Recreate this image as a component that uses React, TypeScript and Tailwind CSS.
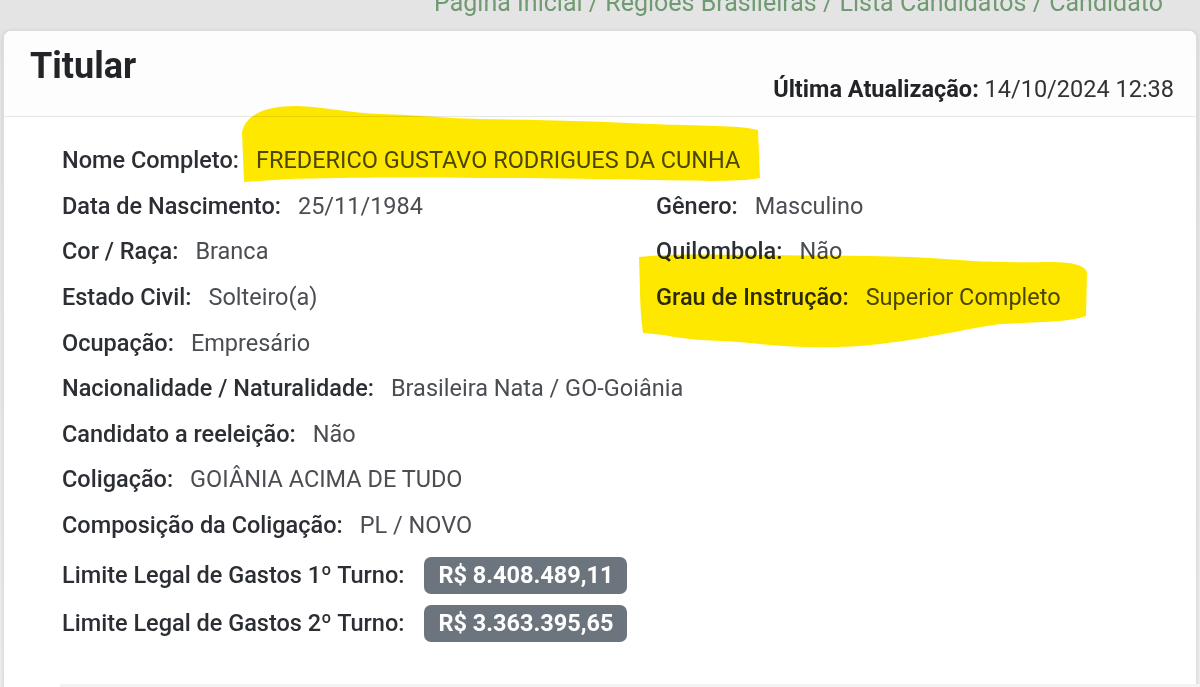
import React from 'react';

// Linha de campo: rótulo em negrito médio + valor
function Field({ label, value }: { label: string; value: React.ReactNode }) {
  return (
    <div className="flex items-center h-[45.6px] whitespace-nowrap">
      <span className="font-medium text-[#2b2e33]">{label}</span>
      <span className="ml-[17px] text-[#4a4d52]">{value}</span>
    </div>
  );
}

function Badge({ children }: { children: React.ReactNode }) {
  return (
    <span className="inline-flex items-center justify-center w-[203px] h-[37px] rounded-[7px] bg-[#6c757d] text-white font-bold text-[23.5px]">
      {children}
    </span>
  );
}

export default function App() {
  const left: [string, string][] = [
    ['Data de Nascimento:', '25/11/1984'],
    ['Cor / Raça:', 'Branca'],
    ['Estado Civil:', 'Solteiro(a)'],
  ];
  const right: [string, string][] = [
    ['Gênero:', 'Masculino'],
    ['Quilombola:', 'Não'],
    ['Grau de Instrução:', 'Superior Completo'],
  ];
  const rest: [string, string][] = [
    ['Ocupação:', 'Empresário'],
    ['Nacionalidade / Naturalidade:', 'Brasileira Nata / GO-Goiânia'],
    ['Candidato a reeleição:', 'Não'],
    ['Coligação:', 'GOIÂNIA ACIMA DE TUDO'],
    ['Composição da Coligação:', 'PL / NOVO'],
  ];

  return (
    <div
      className="relative w-[1200px] h-[687px] overflow-hidden bg-gradient-to-b from-[#e4e4e4] to-[#efefef]"
      style={{ fontFamily: 'Roboto, "Noto Sans", sans-serif' }}
    >
      {/* breadcrumb cortado no topo */}
      <div className="h-[30px] flex justify-end items-start pr-[37px]">
        <span className="text-[25px] leading-none text-[#6f9a72] whitespace-nowrap -mt-[10px]">
          Página Inicial / Regiões Brasileiras / Lista Candidatos / Candidato
        </span>
      </div>

      <div className="ml-[3px] mr-[3px] h-[700px] bg-white rounded-t-[8px] border border-[#dedede] shadow-[0_1px_4px_rgba(0,0,0,0.12)]">
        <div className="h-[86px] flex justify-between border-b border-[#e6e6e6] bg-[#fdfdfd] rounded-t-[8px] px-[26px] pr-[22px]">
          <h1 className="pt-[14px] text-[36px] leading-[42px] font-bold text-[#222428]">Titular</h1>
          <div className="pt-[41px] text-[23.5px] text-[#333] whitespace-nowrap">
            <span className="font-bold text-[#222428]">Última Atualização:</span> 14/10/2024 12:38
          </div>
        </div>

        <div className="relative pl-[58px] pt-[21px] text-[23.5px]">
          <Field label="Nome Completo:" value="FREDERICO GUSTAVO RODRIGUES DA CUNHA" />
          <div className="grid grid-cols-[594px_1fr]">
            <div>
              {left.map(([l, v]) => (
                <Field key={l} label={l} value={v} />
              ))}
            </div>
            <div>
              {right.map(([l, v]) => (
                <Field key={l} label={l} value={v} />
              ))}
            </div>
          </div>
          {rest.map(([l, v]) => (
            <Field key={l} label={l} value={v} />
          ))}
          <div className="flex items-center h-[48px] mt-[3px] whitespace-nowrap">
            <span className="font-medium text-[#2b2e33]">Limite Legal de Gastos 1º Turno:</span>
            <span className="ml-[20px]"><Badge>R$ 8.408.489,11</Badge></span>
          </div>
          <div className="flex items-center h-[48px] whitespace-nowrap">
            <span className="font-medium text-[#2b2e33]">Limite Legal de Gastos 2º Turno:</span>
            <span className="ml-[20px]"><Badge>R$ 3.363.395,65</Badge></span>
          </div>
        </div>
      </div>

      {/* marcações de marca-texto sobre o conteúdo */}
      <svg
        className="absolute left-0 top-0 pointer-events-none mix-blend-multiply"
        width="1200"
        height="687"
        viewBox="0 0 1200 687"
      >
        <path
          d="M242 132 C246 114 266 106 296 106 C326 107 350 113 380 114 C420 115 440 118 480 119 C540 120 600 121 650 124 C700 126 740 125 758 130 L760 178 C740 182 700 181 650 180 C600 179 540 178 480 178 C400 177 330 178 290 179 L244 182 Z"
          fill="#ffe800"
        />
        <path
          d="M639 257 C660 254 700 254 760 255 C820 256 880 255 930 258 C970 261 1000 263 1050 262 C1075 262 1085 266 1087 272 L1086 316 C1070 322 1040 322 1000 324 C960 330 930 338 880 344 C840 349 790 348 750 343 C720 340 690 341 664 335 L643 333 C641 320 640 300 640 290 Z"
          fill="#ffe800"
        />
      </svg>

      <div className="absolute left-[60px] right-0 top-[684px] h-[3px] bg-[#f3f3f3]" />
    </div>
  );
}
